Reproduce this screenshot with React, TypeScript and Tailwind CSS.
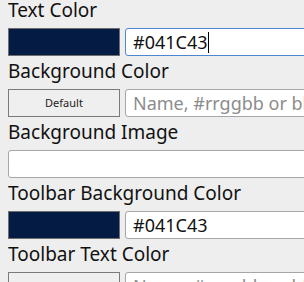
import React from 'react';

const font = { fontFamily: '"Noto Sans", Lato, sans-serif' };

function Label({ children }: { children: React.ReactNode }) {
  return <div className="h-[28px] whitespace-nowrap text-[19px] leading-[20px] text-[#111]">{children}</div>;
}

function Swatch({ color }: { color: string }) {
  return <div className="h-[28px] w-[112px] shrink-0 border border-[#6e6e6e]" style={{ backgroundColor: color }} />;
}

function DefaultButton() {
  return (
    <div className="flex h-[28px] w-[112px] shrink-0 items-center justify-center border border-[#7a7a7a] bg-[#efefef] text-[11px] text-[#222]">
      Default
    </div>
  );
}

function TextBox({ value, focused }: { value?: string; focused?: boolean }) {
  return (
    <div
      className={`flex h-[28px] w-[240px] shrink-0 items-center overflow-hidden rounded-[3px] border bg-white px-[7px] text-[18px] whitespace-nowrap ${
        focused ? 'border-[#4f86d4]' : 'border-[#a6a6a6]'
      }`}
    >
      {value ? (
        <>
          <span className="text-[#111]">{value}</span>
          {focused && <span className="ml-[1px] inline-block h-[21px] w-[1px] bg-black" />}
        </>
      ) : (
        <span className="text-[#8c8c8c]">Name, #rrggbb or blank</span>
      )}
    </div>
  );
}

export default function App() {
  return (
    <div className="h-[282px] w-[304px] overflow-hidden bg-[#eeeeee] px-2" style={font}>
      <div className="flex flex-col gap-[5px]">
        <div>
          <Label>Text Color</Label>
          <div className="flex gap-[5px]">
            <Swatch color="#041C43" />
            <TextBox value="#041C43" focused />
          </div>
        </div>
        <div>
          <Label>Background Color</Label>
          <div className="flex gap-[5px]">
            <DefaultButton />
            <TextBox />
          </div>
        </div>
        <div>
          <Label>Background Image</Label>
          <div className="h-[28px] w-[320px] rounded-[3px] border border-[#a6a6a6] bg-white" />
        </div>
        <div>
          <Label>Toolbar Background Color</Label>
          <div className="flex gap-[5px]">
            <Swatch color="#041C43" />
            <TextBox value="#041C43" />
          </div>
        </div>
        <div>
          <Label>Toolbar Text Color</Label>
          <div className="flex gap-[5px]">
            <DefaultButton />
            <TextBox />
          </div>
        </div>
      </div>
    </div>
  );
}
